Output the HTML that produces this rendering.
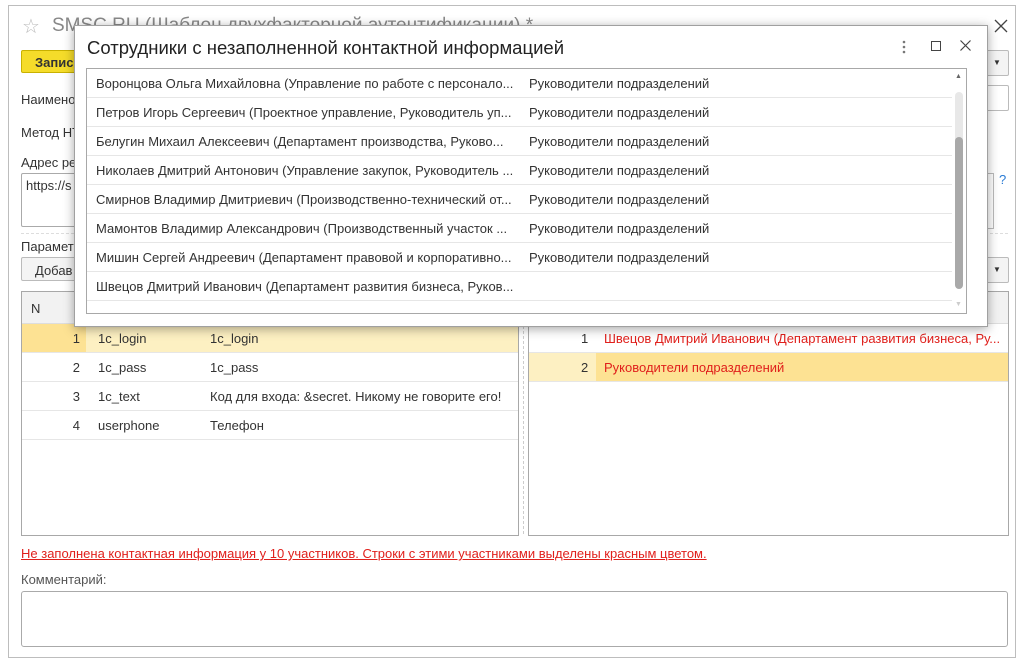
<html><head><style>
body{margin:0;width:1034px;height:660px;background:#fff;font-family:"Liberation Sans",Arial,sans-serif;font-size:13px;color:#333;position:relative;overflow:hidden}
.a{position:absolute}
.win{left:8px;top:5px;width:1006px;height:651px;border:1px solid #bdbdbd;background:#fff}
.tbl{border:1px solid #a8a8a8;background:#fff}
.row{position:absolute;left:0;right:0;height:28px;border-bottom:1px solid #e6e6e6}
.row span{position:absolute;top:7px;white-space:nowrap}
.dlg{left:74px;top:25px;width:912px;height:300px;border:1px solid #a0a0a0;background:#fff;box-shadow:0 2px 10px rgba(0,0,0,.35)}
</style></head><body>
<div class="a win"></div>
<div class="a" style="left:22px;top:14px;font-size:20px;color:#bbb">☆</div>
<div class="a" style="left:52px;top:15px;font-size:19px;color:#888">SMSC.RU (Шаблон двухфакторной аутентификации) *</div>
<svg class="a" style="left:994px;top:19px" width="14" height="14"><path d="M1 1L13 13M13 1L1 13" stroke="#444" stroke-width="1.3"/></svg>
<div class="a" style="left:21px;top:50px;width:60px;height:23px;background:#f5dc2a;border:1px solid #c9b100;border-radius:2px;font-weight:bold;padding:4px 0 0 13px;box-sizing:border-box">Запис</div>
<div class="a" style="left:21px;top:92px">Наимено</div>
<div class="a" style="left:21px;top:125px">Метод HT</div>
<div class="a" style="left:21px;top:155px">Адрес ре</div>
<div class="a" style="left:21px;top:173px;width:60px;height:54px;border:1px solid #aaa;border-radius:2px;padding:4px;box-sizing:border-box">https://s</div>
<div class="a" style="left:21px;top:233px;width:987px;border-top:1px dashed #ddd"></div>
<div class="a" style="left:21px;top:239px">Парамет</div>
<div class="a" style="left:21px;top:257px;width:60px;height:24px;border:1px solid #bbb;border-radius:2px;background:#f4f4f4;padding:5px 0 0 13px;box-sizing:border-box">Добав</div>
<div class="a" style="left:985px;top:50px;width:22px;height:24px;border:1px solid #bbb;border-radius:2px;background:#f4f4f4;font-size:8px;text-align:center;line-height:24px">▼</div>
<div class="a" style="left:985px;top:85px;width:22px;height:24px;border:1px solid #bbb;border-radius:2px"></div>
<div class="a" style="left:985px;top:173px;width:8px;height:54px;border:1px solid #bbb;border-left:none"></div>
<div class="a" style="left:999px;top:172px;color:#2a7bd4;font-size:13px">?</div>
<div class="a" style="left:985px;top:257px;width:22px;height:24px;border:1px solid #bbb;border-radius:2px;background:#f4f4f4;font-size:8px;text-align:center;line-height:24px">▼</div>

<div class="a tbl" style="left:21px;top:291px;width:496px;height:243px">
 <div class="a" style="left:0;top:0;right:0;height:31px;background:#f2f2f2;border-bottom:1px solid #ddd"><span class="a" style="left:9px;top:9px">N</span></div>
 <div class="row" style="top:32px;background:#fdf0c2"><div class="a" style="left:0;top:0;width:64px;height:28px;background:#fde293"></div><span style="right:438px">1</span><span style="left:76px">1c_login</span><span style="left:188px">1c_login</span></div>
 <div class="row" style="top:61px"><span style="right:438px">2</span><span style="left:76px">1c_pass</span><span style="left:188px">1c_pass</span></div>
 <div class="row" style="top:90px"><span style="right:438px">3</span><span style="left:76px">1c_text</span><span style="left:188px">Код для входа: &amp;secret. Никому не говорите его!</span></div>
 <div class="row" style="top:119px"><span style="right:438px">4</span><span style="left:76px">userphone</span><span style="left:188px">Телефон</span></div>
</div>
<div class="a" style="left:523px;top:291px;height:243px;border-left:1px dashed #ccc"></div>
<div class="a tbl" style="left:528px;top:291px;width:479px;height:243px">
 <div class="a" style="left:0;top:0;right:0;height:31px;background:#f2f2f2;border-bottom:1px solid #ddd"></div>
 <div class="row" style="top:32px;color:#e0201c"><span style="left:52px;color:#333">1</span><span style="left:75px">Швецов Дмитрий Иванович (Департамент развития бизнеса, Ру...</span></div>
 <div class="row" style="top:61px;background:#fdf0c2;color:#e0201c"><div class="a" style="left:67px;top:0;right:0;height:28px;background:#fde293"></div><span style="left:52px;color:#333">2</span><span style="left:75px">Руководители подразделений</span></div>
</div>
<div class="a" style="left:21px;top:546px;color:#e0201c;text-decoration:underline">Не заполнена контактная информация у 10 участников. Строки с этими участниками выделены красным цветом.</div>
<div class="a" style="left:21px;top:572px;color:#555">Комментарий:</div>
<div class="a" style="left:21px;top:591px;width:985px;height:54px;border:1px solid #aaa;border-radius:3px"></div>

<div class="a dlg">
 <div class="a" style="left:12px;top:11px;font-size:18.5px;color:#222">Сотрудники с незаполненной контактной информацией</div>
 <svg class="a" style="left:827px;top:14px" width="4" height="14"><circle cx="2" cy="2" r="1.3" fill="#777"/><circle cx="2" cy="7" r="1.3" fill="#777"/><circle cx="2" cy="12" r="1.3" fill="#777"/></svg>
 <div class="a" style="left:856px;top:15px;width:8px;height:8px;border:1.3px solid #444"></div>
 <svg class="a" style="left:885px;top:14px" width="11" height="11"><path d="M0.5 0.5L10.5 10.5M10.5 0.5L0.5 10.5" stroke="#444" stroke-width="1.2"/></svg>
 <div class="a" style="left:11px;top:42px;width:879px;height:244px;border:1px solid #a8a8a8;overflow:hidden">
  <div class="row" style="top:0;right:14px"><span style="left:9px">Воронцова Ольга Михайловна (Управление по работе с персонало...</span><span style="left:442px">Руководители подразделений</span></div>
  <div class="row" style="top:29px;right:14px"><span style="left:9px">Петров Игорь Сергеевич (Проектное управление, Руководитель уп...</span><span style="left:442px">Руководители подразделений</span></div>
  <div class="row" style="top:58px;right:14px"><span style="left:9px">Белугин Михаил Алексеевич (Департамент производства, Руково...</span><span style="left:442px">Руководители подразделений</span></div>
  <div class="row" style="top:87px;right:14px"><span style="left:9px">Николаев Дмитрий Антонович (Управление закупок, Руководитель ...</span><span style="left:442px">Руководители подразделений</span></div>
  <div class="row" style="top:116px;right:14px"><span style="left:9px">Смирнов Владимир Дмитриевич (Производственно-технический от...</span><span style="left:442px">Руководители подразделений</span></div>
  <div class="row" style="top:145px;right:14px"><span style="left:9px">Мамонтов Владимир Александрович (Производственный участок ...</span><span style="left:442px">Руководители подразделений</span></div>
  <div class="row" style="top:174px;right:14px"><span style="left:9px">Мишин Сергей Андреевич (Департамент правовой и корпоративно...</span><span style="left:442px">Руководители подразделений</span></div>
  <div class="row" style="top:203px;right:14px"><span style="left:9px">Швецов Дмитрий Иванович (Департамент развития бизнеса, Руков...</span></div>
  <div class="row" style="top:232px;right:14px"></div>
  <div class="a" style="left:868px;top:4px;font-size:7px;color:#666">▲</div>
  <div class="a" style="left:868px;top:232px;font-size:7px;color:#ccc">▼</div>
  <div class="a" style="left:868px;top:23px;width:8px;height:196px;background:#e8e8e8;border-radius:4px"></div>
  <div class="a" style="left:868px;top:68px;width:8px;height:152px;background:#a9a9a9;border-radius:4px"></div>
 </div>
</div>
</body></html>
